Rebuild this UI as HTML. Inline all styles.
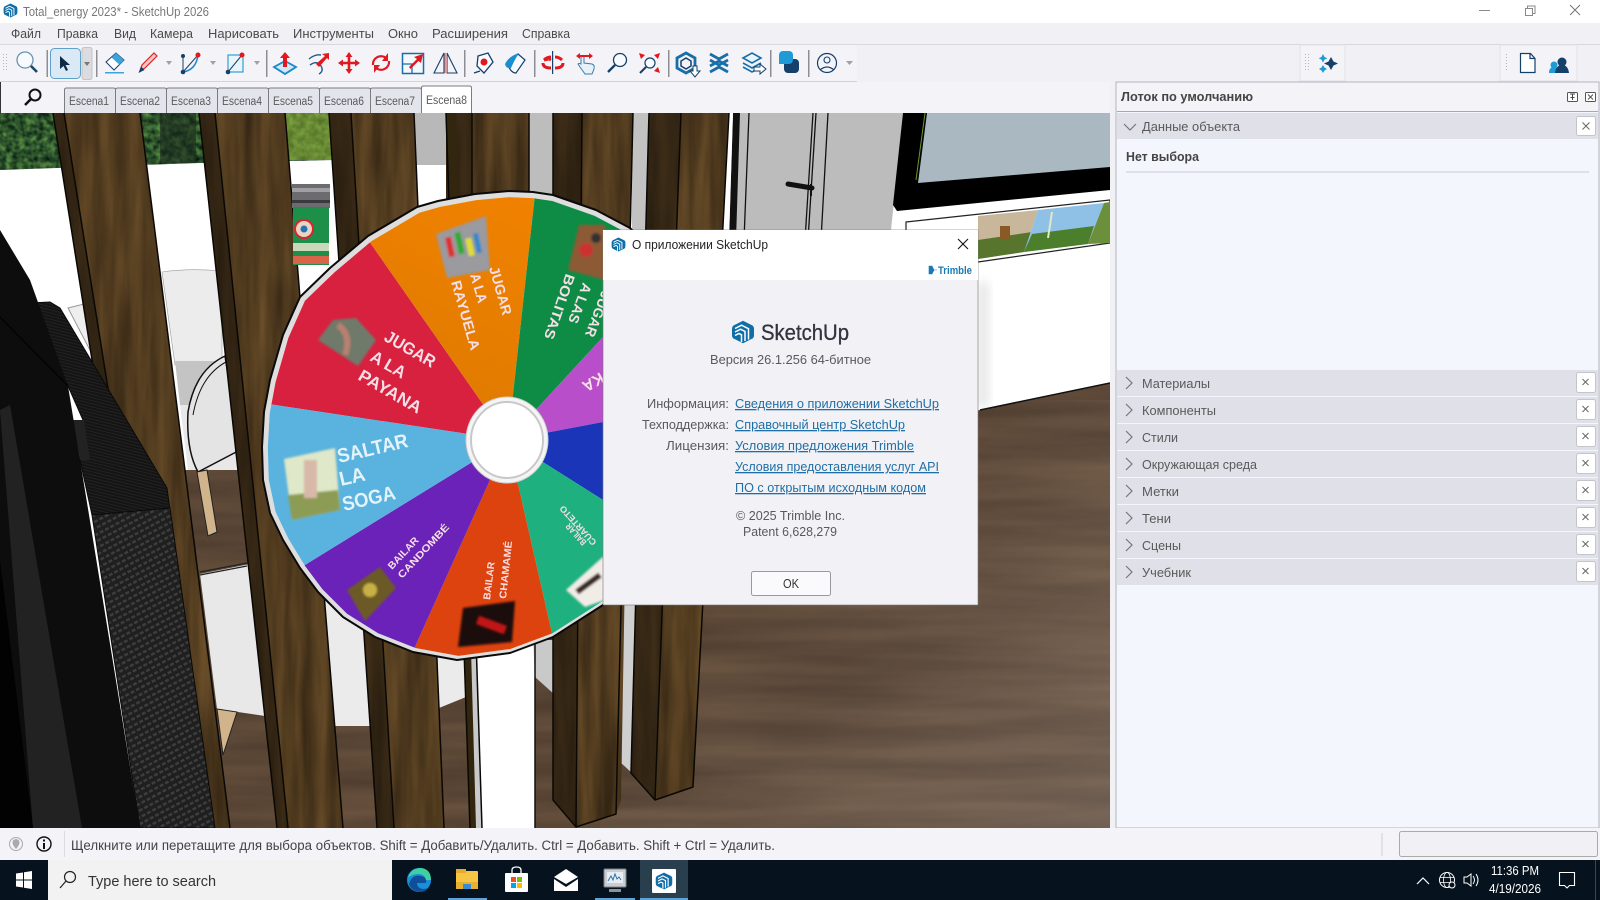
<!DOCTYPE html>
<html lang="ru"><head><meta charset="utf-8"><title>SketchUp</title>
<style>
html,body{margin:0;padding:0;width:1600px;height:900px;overflow:hidden;background:#f0f0f5}
svg{display:block}
text{font-family:"Liberation Sans","Noto Sans CJK SC",sans-serif}
.m{font-size:13px;fill:#4a4a4a}
.tab{font-size:11.5px;fill:#5a5a5a}
.row{font-size:13px;fill:#5a5a5a}
.lb{font-size:13px;fill:#5a5a5a}
.lk{font-size:13px;fill:#1f6fa6;text-decoration:underline}
.w{font-weight:bold;fill:#f6dfe6}
</style></head><body>
<svg xmlns="http://www.w3.org/2000/svg" width="1600" height="900" viewBox="0 0 1600 900">
<defs>
<filter id="wood" x="0" y="0" width="1" height="1" color-interpolation-filters="sRGB"><feTurbulence type="fractalNoise" baseFrequency="0.07 0.007" numOctaves="3" seed="4"/><feColorMatrix values=".28 0 0 0 .175 .21 0 0 0 .125 .11 0 0 0 .065 0 0 0 0 1"/></filter>
<filter id="floorf" x="0" y="0" width="1" height="1" color-interpolation-filters="sRGB"><feTurbulence type="fractalNoise" baseFrequency="0.004 0.05" numOctaves="3" seed="8"/><feColorMatrix values=".16 0 0 0 .275 .13 0 0 0 .21 .1 0 0 0 .16 0 0 0 0 1"/></filter>
<filter id="forest" x="0" y="0" width="1" height="1" color-interpolation-filters="sRGB"><feTurbulence type="fractalNoise" baseFrequency="0.16" numOctaves="2" seed="3"/><feColorMatrix values=".5 0 0 0 -.07 .7 0 0 0 -.02 .3 0 0 0 .02 0 0 0 0 1"/></filter>
<filter id="blur1" x="-10%" y="-10%" width="120%" height="120%"><feGaussianBlur stdDeviation="1"/></filter>
<filter id="sh" x="-50%" y="-10%" width="200%" height="120%"><feGaussianBlur stdDeviation="5"/></filter>
<linearGradient id="fl" x1="0" y1="0" x2="1" y2="1"><stop offset=".35" stop-color="#fff" stop-opacity="0"/><stop offset="1" stop-color="#fff" stop-opacity=".16"/></linearGradient>
<linearGradient id="orng" x1="0" y1="1" x2=".3" y2="0"><stop offset="0" stop-color="#d97800"/><stop offset="1" stop-color="#f58300"/></linearGradient>
<pattern id="carbon" width="6" height="6" patternUnits="userSpaceOnUse" patternTransform="rotate(-28)"><rect width="6" height="6" fill="#1f1f1f"/><rect width="4" height="2.500" fill="#3d3d3d"/></pattern>
<pattern id="rib" width="4" height="3" patternUnits="userSpaceOnUse" patternTransform="rotate(14)"><rect width="4" height="3" fill="#141414"/><rect width="4" height="1" fill="#222"/></pattern>
<pattern id="grip" width="3" height="3" patternUnits="userSpaceOnUse"><rect width="1" height="1" fill="#b5b5bb"/></pattern>
<clipPath id="vp"><rect x="0" y="113" width="1110" height="715"/></clipPath>
<clipPath id="planks">
<polygon points="53,113 140,113 230,828 166,828"/>
<polygon points="199,113 285,113 343,828 277,828"/>
<polygon points="329,113 414,113 444,828 377,828"/>
<polygon points="446,113 529,113 529,280 446,280"/>
<polygon points="553,113 633,113 621,800 616,814 576,827 553,800"/>
<polygon points="649,113 729,113 693,787 655,800 631,773"/>
</clipPath>
<clipPath id="wheelclip"><polygon transform="translate(525 470) scale(.978) translate(-525 -470)" points="509,191 533,192 553,195 596,210 630,228 690,290 722,400 700,510 603,605 553,637 510,653 457,660 413,652 375,637 343,617 318,592 300,568 283,540 270,513 263,480 262,447 264,412 270,380 283,335 300,297 330,268 368,236 417,207 438,201 475,194"/></clipPath>
<symbol id="su" viewBox="0 0 24 24">
<path d="M12 .8 21 5.200Q23 6.300 23 8.800V15.200Q23 17.700 21 18.800L12 23.200 3 18.800Q1 17.700 1 15.200V8.800Q1 6.300 3 5.200Z" fill="#0f6ea8"/>
<path d="M4 8.500 10.500 5.200 17.500 8.700V19.500M4 12 9.500 9.200 14 11.500V21M4 15.500 8 13.500 10.500 14.800V22" fill="none" stroke="#fff" stroke-width="1.500"/>
</symbol>
</defs>

<rect width="1600" height="900" fill="#f0f0f5"/>
<!-- title bar -->
<rect width="1600" height="23" fill="#fff"/>
<use href="#su" x="3" y="3" width="15" height="15"/>
<text x="23" y="16" font-size="12.500" fill="#777" textLength="186" lengthAdjust="spacingAndGlyphs">Total_energy 2023* - SketchUp 2026</text>
<path d="M1479 10.500H1490" stroke="#8a8a8a"/>
<path d="M1525.500 8.500h7v7h-7zM1527.500 8.500v-2.500h7.500v7.500h-2.500" fill="none" stroke="#8a8a8a"/>
<path d="M1570 5l10 10M1580 5l-10 10" stroke="#777" stroke-width="1"/>
<!-- menu -->
<text class="m" x="11" y="38" textLength="30" lengthAdjust="spacingAndGlyphs">Файл</text>
<text class="m" x="57" y="38" textLength="41" lengthAdjust="spacingAndGlyphs">Правка</text>
<text class="m" x="114" y="38" textLength="22" lengthAdjust="spacingAndGlyphs">Вид</text>
<text class="m" x="150" y="38" textLength="43" lengthAdjust="spacingAndGlyphs">Камера</text>
<text class="m" x="208" y="38" textLength="71" lengthAdjust="spacingAndGlyphs">Нарисовать</text>
<text class="m" x="293" y="38" textLength="81" lengthAdjust="spacingAndGlyphs">Инструменты</text>
<text class="m" x="388" y="38" textLength="30" lengthAdjust="spacingAndGlyphs">Окно</text>
<text class="m" x="432" y="38" textLength="76" lengthAdjust="spacingAndGlyphs">Расширения</text>
<text class="m" x="522" y="38" textLength="48" lengthAdjust="spacingAndGlyphs">Справка</text>
<rect y="44" width="1600" height="1" fill="#d8d8de"/>
<!-- toolbar -->
<rect x="0" y="45" width="857" height="36" fill="#f3f3f8"/>
<rect x="0" y="81" width="857" height="1" fill="#d2d2d8"/>
<rect x="3" y="54" width="5" height="18" fill="url(#grip)"/>
<rect x="1300" y="45" width="45" height="36" fill="#f3f3f8" stroke="#e2e2e8"/>
<rect x="1500" y="45" width="77" height="36" fill="#f3f3f8" stroke="#e2e2e8"/>
<rect x="1304" y="54" width="5" height="16" fill="url(#grip)"/>
<rect x="1504" y="54" width="5" height="16" fill="url(#grip)"/>
<g fill="#8d8d93">
<rect x="46.500" y="50" width="1.500" height="27"/><rect x="96" y="50" width="1.500" height="27"/><rect x="266" y="50" width="1.500" height="27"/><rect x="464" y="50" width="1.500" height="27"/><rect x="534" y="50" width="1.500" height="27"/><rect x="668" y="50" width="1.500" height="27"/><rect x="770" y="50" width="1.500" height="27"/><rect x="808" y="50" width="1.500" height="27"/>
</g>
<!-- magnifier -->
<circle cx="25" cy="60" r="8" fill="#f8fbfe" stroke="#6b93b0" stroke-width="1.300"/><path d="M31 66l6 6" stroke="#1c4565" stroke-width="2.600"/>
<!-- select -->
<rect x="50.500" y="48.500" width="30" height="30" rx="4" fill="#d9e9f5" stroke="#5f9fc8"/>
<path d="M60 56V69L63.500 66 66 71 68 70 65.500 65H70Z" fill="#102a44"/>
<rect x="82" y="47.500" width="10" height="32" rx="2" fill="#dcdce0" stroke="#c4c4c8"/><path d="M84 62h6l-3 4z" fill="#777"/>
<!-- eraser -->
<path d="M106 62 116 53 124 60 114 70Z" fill="#fff" stroke="#14406a" stroke-width="1"/><path d="M111.500 57.500 116 53 124 60 119.500 64.800Z" fill="#3ba4dc"/><rect x="105" y="72" width="19" height="1.500" fill="#3ba4dc"/>
<!-- pencil -->
<path d="M140 71 142 65 154 53 157 56 145 68Z" fill="#f4c4c0" stroke="#d82a2a" stroke-width="1.200"/><path d="M138.500 73 141 66.500 144.500 70Z" fill="#14406a"/>
<path d="M166 61h6l-3 4z" fill="#a0a0a6"/>
<!-- arc -->
<path d="M183 56V72L198 55" fill="none" stroke="#14406a" stroke-width="1"/><path d="M183 72Q196 70 198 55" fill="none" stroke="#1c86c8" stroke-width="1.500"/><circle cx="183" cy="56" r="2" fill="#14406a"/><circle cx="183" cy="72" r="2.300" fill="#14406a"/><circle cx="198" cy="55" r="2.500" fill="#e0181f"/>
<path d="M210 61h6l-3 4z" fill="#a0a0a6"/>
<!-- rect -->
<rect x="228" y="55" width="15" height="17" fill="#eaf4fb" stroke="#2196d3" stroke-width="1.100"/><path d="M228 72 242 55" stroke="#14406a" stroke-width="1"/><circle cx="242" cy="55" r="2.500" fill="#e0181f"/><circle cx="228" cy="72" r="2.300" fill="#14406a"/>
<path d="M254 61h6l-3 4z" fill="#a0a0a6"/>
<!-- pushpull -->
<path d="M274 67 285 61 296 67 285 74Z" fill="#cfe8f7" stroke="#1a87c8" stroke-width="1.800"/><path d="M283 67V58H280L285 52 290 58H287V67Z" fill="#e0181f"/>
<!-- follow me -->
<path d="M309 59Q315 54 321 55M310 65Q317 60 321 66 324 71 319 74" fill="none" stroke="#1d5d8c" stroke-width="1.400"/><path d="M316 64 325 56 322 54 329 53 329 60 327 58 319 67Z" fill="#e0181f"/>
<!-- move -->
<path d="M349 52l3.500 5h-2.200v4.700h4.700V59.500L360 63l-5 3.500v-2.200h-4.700V69h2.200L349 74l-3.500-5h2.200v-4.700H343v2.200L338 63l5-3.500v2.200h4.700V57h-2.200Z" fill="#e0181f"/>
<!-- rotate -->
<path d="M373 65a8 8 0 0 1 13-7M389 61a8 8 0 0 1-13 7" fill="none" stroke="#e0181f" stroke-width="2.200"/><path d="M388 53v8h-6zM374 73v-8h6z" fill="#e0181f"/>
<!-- scale -->
<rect x="402.500" y="53.500" width="21" height="20" fill="#f3f8fc" stroke="#1a6ea8" stroke-width="1.500"/><path d="M402 64h10v10" fill="none" stroke="#1a6ea8" stroke-width="1.300"/><path d="M409 67l8-8-3-2 9-3-2 9-2.500-2-8 8z" fill="#e0181f"/>
<!-- mirror -->
<path d="M444 53 434 73H444ZM447 53 457 73H447Z" fill="#f4f4f8" stroke="#14406a" stroke-width="1.100"/><rect x="444.500" y="53" width="2.500" height="20" fill="#d99"/>
<!-- tape -->
<path d="M478 56 488 53 493 62 484 73 477 66Z" fill="#f7fbff" stroke="#14406a" stroke-width="1.300"/><circle cx="484" cy="62" r="3.500" fill="#e0181f"/><path d="M474 73 480 71" stroke="#14406a" stroke-width="1.400"/>
<!-- paint -->
<path d="M508 65 518 54 525 60 516 73Q511 73 508 65Z" fill="#f7fbff" stroke="#14406a" stroke-width="1.200"/><path d="M505 64Q509 56 519 53 515 59 511 68 506 69 505 64Z" fill="#1a8ed0"/>
<!-- orbit -->
<path d="M544 60Q552 58 549 60M543 63q0 5 8 5M563 63q0 5-8 5M544 60q3-3 7-3M562 60q-3-3-7-3" fill="none" stroke="#e0181f" stroke-width="3"/><rect x="552" y="51" width="1.200" height="23" fill="#14406a"/>
<!-- pan -->
<path d="M581 63V57q1.500-2 3 0v6l8 1q3 1 2 5l-2 5h-7l-5-7-2-3q1-1 3 0Z" fill="#e8f1f8" stroke="#3a7ba8"/><path d="M576 56l4-3v2h9v-2l4 3-4 3v-2h-9v2z" fill="#e0181f"/>
<!-- zoom -->
<circle cx="620" cy="60" r="6.500" fill="#f8fbfe" stroke="#14406a" stroke-width="1.300"/><path d="M615 65l-7 7" stroke="#14406a" stroke-width="2.300"/>
<!-- zoom ext -->
<circle cx="650" cy="63" r="5" fill="#f8fbfe" stroke="#14406a" stroke-width="1.200"/><path d="M646 67l-6 6" stroke="#14406a" stroke-width="2"/><path d="M639 53l6 2-4 4zM660 53l-2 6-4-4zM660 73l-6-2 4-4z" fill="#e0181f"/>
<!-- 3dw -->
<path d="M686 53 695 58V68L686 73 677 68V58Z" fill="#f3f3f8" stroke="#1a6ea8" stroke-width="2.800"/><path d="M686 58 691 61V66L686 69 681 66V61Z" fill="none" stroke="#14406a" stroke-width="1.500"/><path d="M693 66h4v5h3l-5 6-5-6h3z" fill="#fff" stroke="#14406a"/>
<!-- extension -->
<path d="M710 54l9 5 9-5M710 72l9-5 9 5M710 60l9 5 9-5M710 66l9-5 9 5" fill="none" stroke="#1a6ea8" stroke-width="2.800"/>
<!-- layers -->
<path d="M743 58l9-5 9 5-9 5zM743 63l9 5 9-5M743 67l9 5 4-2" fill="#eaf4fb" stroke="#1a6ea8" stroke-width="1.600"/><path d="M754 67h6v-3l6 5-6 5v-3h-6z" fill="#fff" stroke="#14406a"/>
<!-- chat -->
<rect x="784" y="59" width="15" height="14" rx="4" fill="#14406a"/><path d="M779 55a4 4 0 0 1 4-4h6a4 4 0 0 1 4 4v5a4 4 0 0 1-4 4h-10z" fill="#1e9ad6"/>
<!-- user -->
<circle cx="827" cy="63" r="9.500" fill="none" stroke="#14406a" stroke-width="1.200"/><circle cx="827" cy="60" r="3" fill="none" stroke="#14406a" stroke-width="1.100"/><path d="M820 70q7-6 14 0" fill="none" stroke="#14406a" stroke-width="1.100"/>
<path d="M846 61h7l-3.500 4z" fill="#a0a0a6"/>
<!-- ai sparkle -->
<path d="M1331 57l2.500 4.500 4.500 2-4.500 2-2.500 4.500-2.500-4.500-4.500-2 4.500-2z" fill="#14406a"/><path d="M1323 54l1.500 3 2.800 1.300-2.800 1.300-1.500 3-1.500-3-2.800-1.300 2.800-1.300zM1323 65l1.500 2.500 2.500 1.500-2.500 1.500-1.500 2.500-1.500-2.500-2.500-1.500 2.500-1.500z" fill="#1e9ad6"/>
<!-- doc -->
<path d="M1520.500 53.500h10l4.500 5v14h-14.500zM1530 53.500v5h5" fill="#fff" stroke="#14406a" stroke-width="1.200"/>
<!-- users -->
<circle cx="1554" cy="65" r="3.500" fill="#1e9ad6"/><path d="M1549 73q0-6 5-6t5 6z" fill="#1e9ad6"/><circle cx="1562" cy="62" r="4.500" fill="#14406a"/><path d="M1555 73q1-8 7-8t7 8z" fill="#14406a"/>

<!-- scene tabs -->
<rect x="0" y="82" width="1110" height="31" fill="#f3f3f8"/><rect x="0" y="82" width="1" height="31" fill="#333"/>
<circle cx="35" cy="95" r="5.500" fill="none" stroke="#111" stroke-width="2"/><path d="M31 99l-6 6" stroke="#111" stroke-width="2.500"/>
<g fill="#e4e5ec" stroke="#7b7b80">
<path d="M64.500 113V90q0-2 2-2h47q2 0 2 2v23"/><path d="M115.500 113V90q0-2 2-2h47q2 0 2 2v23"/><path d="M166.500 113V90q0-2 2-2h47q2 0 2 2v23"/><path d="M217.500 113V90q0-2 2-2h47q2 0 2 2v23"/><path d="M268.500 113V90q0-2 2-2h47q2 0 2 2v23"/><path d="M319.500 113V90q0-2 2-2h47q2 0 2 2v23"/><path d="M370.500 113V90q0-2 2-2h47q2 0 2 2v23"/><path d="M421.500 113V88q0-2 2-2h46q2 0 2 2v25" fill="#fff"/>
</g>
<text class="tab" x="69" y="105" textLength="40" lengthAdjust="spacingAndGlyphs">Escena1</text><text class="tab" x="120" y="105" textLength="40" lengthAdjust="spacingAndGlyphs">Escena2</text><text class="tab" x="171" y="105" textLength="40" lengthAdjust="spacingAndGlyphs">Escena3</text><text class="tab" x="222" y="105" textLength="40" lengthAdjust="spacingAndGlyphs">Escena4</text><text class="tab" x="273" y="105" textLength="40" lengthAdjust="spacingAndGlyphs">Escena5</text><text class="tab" x="324" y="105" textLength="40" lengthAdjust="spacingAndGlyphs">Escena6</text><text class="tab" x="375" y="105" textLength="40" lengthAdjust="spacingAndGlyphs">Escena7</text><text class="tab" x="426" y="104" textLength="41" lengthAdjust="spacingAndGlyphs">Escena8</text>

<!-- VIEWPORT -->
<g clip-path="url(#vp)">
<rect x="0" y="113" width="1110" height="715" fill="#fff"/>
<!-- forest -->
<rect x="0" y="113" width="335" height="60" filter="url(#forest)" clip-path="polygon(0 0,100% 0,100% 47px,200px 50px,0 57px)"/>
<rect x="285" y="113" width="48" height="47" fill="#8fae3a" opacity=".6"/>
<rect x="160" y="113" width="36" height="50" fill="#1d2b1e" opacity=".6"/>
<!-- greys -->
<rect x="414" y="113" width="34" height="52" fill="#b8b8b8"/>
<rect x="529" y="113" width="26" height="120" fill="#bdbdbd"/>
<rect x="632" y="113" width="18" height="120" fill="#c2c2c2"/>
<polygon points="733,113 903,113 890,240 725,240" fill="#bcbcbc"/>
<polygon points="733,113 740,113 736,240 729,240" fill="#111"/>
<path d="M749 113 744 240M813 113 805 240M816 113 808 240M828 113 821 240" stroke="#111" stroke-width="1.300" fill="none"/>
<path d="M788 184 812 188" stroke="#111" stroke-width="5" stroke-linecap="round"/><path d="M811 184V196" stroke="#111" stroke-width="2"/>
<!-- screen -->
<polygon points="903,113 1110,113 1110,190 897,211 893,205" fill="#000"/>
<polygon points="927,113 1110,113 1110,167 918,183" fill="#a9b8c1"/>
<path d="M925 113 916 180" stroke="#6a9a2a" stroke-width="1"/>
<!-- banner -->
<polygon points="906,222 1110,200 1110,243 978,262 906,270" fill="#fff" stroke="#222" stroke-width="1.200"/>
<polygon points="978,216 1038,210 1024,252 978,259" fill="#c9b79b"/><polygon points="978,240 1032,232 1024,252 978,259" fill="#57752c"/><rect x="1000" y="226" width="10" height="14" fill="#8a5a24"/>
<polygon points="1038,210 1104,203 1088,244 1024,252" fill="#8fc0e6"/><polygon points="1032,234 1094,226 1088,244 1024,252" fill="#4c7f2c"/><path d="M1048 238 1052 212" stroke="#dfe8c8" stroke-width="2"/>
<polygon points="1104,203 1110,202 1110,243 1088,244" fill="#6b8f3a"/>
<!-- floor -->
<rect x="172" y="383" width="938" height="445" filter="url(#floorf)" clip-path="polygon(0 87px,428px 87px,808px 27px,938px 0,938px 445px,0 445px)"/>
<rect x="600" y="400" width="510" height="428" fill="url(#fl)"/>
<path d="M980 410 1110 383" stroke="#111" stroke-width="1.500"/>
<!-- chair -->
<path d="M162 272Q190 268 222 271V365H175Z" fill="#ececec" stroke="#999" stroke-width=".6"/>
<polygon points="175,361 225,361 225,405 180,405" fill="#c4c4c4"/>
<polygon points="180,405 230,405 240,470 188,470" fill="#e8e8e8"/>
<path d="M188 412Q195 370 225 356L240 450 198 472Q186 450 188 412Z" fill="#e4e4e4" stroke="#111" stroke-width="1.500"/>
<path d="M193 415Q200 376 226 362" fill="none" stroke="#111"/>
<polygon points="197,472 207,470 217,532 208,536" fill="#d2b48c" stroke="#222"/>
<polygon points="200,574 250,564 265,716 217,709" fill="#e8e8e8"/>
<path d="M200 572 247 563M200 575 247 566" stroke="#222" stroke-width="1.200"/>
<polygon points="217,709 237,712 223,755" fill="#d2b48c" stroke="#222"/>
<polygon points="68,308 84,304 92,354" fill="#eee" stroke="#999"/>
<!-- cushions -->
<rect x="320" y="590" width="55" height="136" fill="#ebebeb"/>
<polygon points="437,640 466,640 466,697 439,708" fill="#ebebeb"/>
<!-- white column & greys at bottom -->
<polygon points="470,640 535,640 535,828 480,828" fill="#fff"/>
<polygon points="466,640 477,640 482,828 474,828" fill="#c9c9c9"/>
<polygon points="533,640 555,640 555,695 535,677" fill="#c9c9c9"/><path d="M535 640V828" stroke="#111" stroke-width="1.500"/>
<polygon points="622,600 636,600 632,773 620,762" fill="#cfcfcf"/>
<polygon points="729,113 733,113 729,240 725,240" fill="#fff"/>
<!-- planks -->
<rect x="0" y="113" width="760" height="715" filter="url(#wood)" clip-path="url(#planks)"/>
<g fill="#17110a" opacity=".5">
<polygon points="53,113 64,113 178,828 166,828"/>
<polygon points="199,113 215,113 288,828 277,828"/>
<polygon points="329,113 351,113 394,828 377,828"/>
<polygon points="446,113 472,113 472,280 446,280"/>
<polygon points="553,113 582,113 576,827 553,800"/>
<polygon points="649,113 681,113 655,800 631,773"/>
</g>
<polygon points="446,113 456,113 476,828 470,828" fill="#33260f"/>
<g fill="none" stroke="#0a0805" stroke-width="1.500" stroke-linejoin="round">
<path d="M53 113 166 828M140 113 230 828M64 113 178 828"/>
<path d="M199 113 277 828M285 113 343 828M215 113 288 828"/>
<path d="M329 113 377 828M414 113 444 828M351 113 394 828"/>
<path d="M446 113 470 828M529 113V280M472 113V280M476 640 482 828"/>
<path d="M553 113V800L576 827 616 814 633 113M582 113 576 827"/>
<path d="M649 113 631 773 655 800 693 787 729 113M681 113 655 800"/>
</g>
<!-- bucket -->
<rect x="292" y="184" width="38" height="24" fill="#6b6b70"/><rect x="292" y="188" width="38" height="4" fill="#a0a0a4"/><rect x="292" y="200" width="38" height="3" fill="#3a3a3a"/>
<rect x="293" y="207" width="36" height="58" fill="#1e8f49"/><rect x="293" y="243" width="36" height="8" fill="#c8d8b8"/><rect x="293" y="256" width="36" height="8" fill="#d8644a"/>
<circle cx="304" cy="229" r="9" fill="#e8d6c0" stroke="#d23" stroke-width="2"/><circle cx="304" cy="229" r="3.500" fill="#2a70b8"/>
<!-- WHEEL -->
<polygon points="509,191 533,192 553,195 596,210 630,228 690,290 722,400 700,510 603,605 553,637 510,653 457,660 413,652 375,637 343,617 318,592 300,568 283,540 270,513 263,480 262,447 264,412 270,380 283,335 300,297 330,268 368,236 417,207 438,201 475,194" fill="#dedede" stroke="#0a0a0a" stroke-width="2" stroke-linejoin="round"/>
<g clip-path="url(#wheelclip)">
<rect x="250" y="180" width="480" height="490" fill="#fff"/>
<polygon points="508,440 155,387 120,150 311,158" fill="#d8203f"/>
<polygon points="508,440 311,158 548,76" fill="url(#orng)"/>
<polygon points="508,440 548,76 720,100 698,234" fill="#0e8c45"/>
<polygon points="508,440 698,234 800,250 793,386" fill="#b84ec9"/>
<polygon points="508,440 793,386 793,620" fill="#1a35b8"/>
<polygon points="508,440 793,620 700,760 574,730" fill="#1fb07f"/>
<polygon points="508,440 574,730 365,758" fill="#dd430e"/>
<polygon points="508,440 365,758 196,632" fill="#6a22b8"/>
<polygon points="508,440 196,632 155,387" fill="#5ab2de"/>
</g>
<!-- photos -->
<g filter="url(#blur1)">
<polygon points="436,234 486,216 490,270 447,278" fill="#9a9a9f"/>
<rect x="447" y="237" width="6" height="20" fill="#d33" transform="rotate(-12 450 247)"/><rect x="457" y="232" width="6" height="22" fill="#3a3" transform="rotate(-12 460 245)"/><rect x="467" y="238" width="6" height="18" fill="#dd3" transform="rotate(-12 470 247)"/><rect x="475" y="233" width="5" height="20" fill="#38c" transform="rotate(-12 478 243)"/>
<polygon points="333,320 356,318 376,340 358,366 318,340" fill="#707a6a"/><path d="M338 325Q352 335 345 355" stroke="#b88070" stroke-width="6" fill="none"/>
<polygon points="284,459 335,448 340,510 292,520" fill="#dfe8c8"/><polygon points="288,495 338,490 340,510 292,520" fill="#8d9c55"/><rect x="304" y="460" width="13" height="38" fill="#d8b8a8"/>
<polygon points="579,225 605,225 605,280 568,270" fill="#8c5a34"/><circle cx="586" cy="250" r="7" fill="#c33"/><circle cx="596" cy="238" r="5" fill="#333"/>
<polygon points="347,590 380,567 396,588 365,621" fill="#6c5a28"/><circle cx="370" cy="590" r="7" fill="#c8b044"/>
<polygon points="463,608 515,601 512,642 458,647" fill="#1a0d0d"/><path d="M478 620 505 630" stroke="#c01818" stroke-width="8"/>
<polygon points="566,590 605,555 605,600 585,607" fill="#f2ece6"/><path d="M577 592 600 575" stroke="#3a2a20" stroke-width="6"/>
</g>
<!-- wheel text -->
<text class="w" font-size="17" transform="translate(383 340) rotate(30)" textLength="56" lengthAdjust="spacingAndGlyphs">JUGAR</text>
<text class="w" font-size="17" transform="translate(369 360) rotate(30)" textLength="38" lengthAdjust="spacingAndGlyphs">A LA</text>
<text class="w" font-size="17" transform="translate(357 379) rotate(30)" textLength="70" lengthAdjust="spacingAndGlyphs">PAYANA</text>
<text class="w" font-size="14" transform="translate(489 268) rotate(74)" textLength="50" lengthAdjust="spacingAndGlyphs">JUGAR</text>
<text class="w" font-size="14" transform="translate(470 275) rotate(74)" textLength="30" lengthAdjust="spacingAndGlyphs">A LA</text>
<text class="w" font-size="14" transform="translate(451 282) rotate(74)" textLength="72" lengthAdjust="spacingAndGlyphs">RAYUELA</text>
<text class="w" font-size="14" transform="translate(602 290) rotate(111)" textLength="48" lengthAdjust="spacingAndGlyphs">JUGAR</text>
<text class="w" font-size="14" transform="translate(583 282) rotate(111)" textLength="42" lengthAdjust="spacingAndGlyphs">A LAS</text>
<text class="w" font-size="14" transform="translate(566 273) rotate(109)" textLength="68" lengthAdjust="spacingAndGlyphs">BOLITAS</text>
<text class="w" font-size="16" transform="translate(600 372) rotate(150)" textLength="22" lengthAdjust="spacingAndGlyphs">KA</text>
<text font-size="20" font-weight="bold" fill="#e4f3fb" transform="translate(339 463) rotate(-13)" textLength="72" lengthAdjust="spacingAndGlyphs">SALTAR</text>
<text font-size="20" font-weight="bold" fill="#e4f3fb" transform="translate(341 486) rotate(-13)" textLength="26" lengthAdjust="spacingAndGlyphs">LA</text>
<text font-size="20" font-weight="bold" fill="#e4f3fb" transform="translate(344 511) rotate(-13)" textLength="54" lengthAdjust="spacingAndGlyphs">SOGA</text>
<text class="w" font-size="10" transform="translate(392 570) rotate(-47)" textLength="40" lengthAdjust="spacingAndGlyphs">BAILAR</text>
<text class="w" font-size="10" transform="translate(402 579) rotate(-47)" textLength="70" lengthAdjust="spacingAndGlyphs">CANDOMBÉ</text>
<text class="w" font-size="10" transform="translate(490 600) rotate(-83)" textLength="38" lengthAdjust="spacingAndGlyphs">BAILAR</text>
<text class="w" font-size="10" transform="translate(506 599) rotate(-84)" textLength="58" lengthAdjust="spacingAndGlyphs">CHAMAMÉ</text>
<text class="w" font-size="9" transform="translate(587 542) rotate(228)" textLength="26" lengthAdjust="spacingAndGlyphs">BAILAR</text>
<text class="w" font-size="9" transform="translate(597 542) rotate(228)" textLength="50" lengthAdjust="spacingAndGlyphs">CUARTETO</text>
<!-- hub -->
<ellipse cx="507" cy="440" rx="41" ry="43" fill="#f4f4f4" stroke="#cfcfcf" stroke-width="1"/>
<ellipse cx="507" cy="440" rx="36" ry="38" fill="#fff" stroke="#c8c8c8" stroke-width="2"/>
<!-- black objects -->
<polygon points="30,303 50,302 60,308 167,488 170,510 92,515 80,460 83,420 68,386" fill="url(#rib)" stroke="#0a0a0a"/>
<polygon points="73,420 84,420 90,460 80,460" fill="#222"/>
<polygon points="92,515 170,508 215,828 140,828" fill="url(#carbon)" stroke="#0a0a0a"/>
<polygon points="0,230 30,280 68,386 140,828 0,828" fill="#0d0d0d"/>
<polygon points="0,410 10,405 82,828 33,828" fill="#222"/>
<polygon points="0,560 33,828 0,828" fill="#020202"/>
<path d="M0 317 68 386" stroke="#000" stroke-width="1"/>
<!-- dialog shadow on wall -->
<rect x="978" y="282" width="10" height="125" fill="#777" opacity=".2" filter="url(#sh)"/>
</g>

<!-- right panel -->
<rect x="1116" y="82" width="483" height="746" fill="#f3f6fd" stroke="#b4b4ba"/>
<rect x="1117" y="83" width="481" height="28" fill="#f3f3f8"/><rect x="1117" y="111" width="481" height="1" fill="#a8a8ae"/>
<text x="1121" y="101" font-size="13" font-weight="bold" fill="#444" textLength="132" lengthAdjust="spacingAndGlyphs">Лоток по умолчанию</text>
<rect x="1567.500" y="92.500" width="10" height="9" fill="#fff" stroke="#555" rx="1"/><path d="M1570 94h5M1570.500 97.500h4M1572.500 94v6" stroke="#444"/>
<rect x="1585.500" y="92.500" width="10" height="9" fill="#fff" stroke="#555" rx="1"/><path d="M1588 94.500l5 5M1593 94.500l-5 5" stroke="#555"/>
<rect x="1117" y="113" width="481" height="26" fill="#dfe0e8"/>
<path d="M1124 124l6 6 6-6" fill="none" stroke="#777" stroke-width="1.200"/>
<text class="row" x="1142" y="131" textLength="98" lengthAdjust="spacingAndGlyphs">Данные объекта</text>
<rect x="1576.500" y="116.500" width="19" height="19" rx="2" fill="#fff" stroke="#c4c4ca"/><path d="M1582.500 122.500l7 7M1589.500 122.500l-7 7" stroke="#666"/>
<text x="1126" y="161" font-size="13" font-weight="bold" fill="#444" textLength="73" lengthAdjust="spacingAndGlyphs">Нет выбора</text>
<rect x="1126" y="171" width="463" height="2" fill="#dfe1e9"/>
<g fill="#dfe0e8"><rect x="1117" y="370" width="481" height="26"/><rect x="1117" y="397" width="481" height="26"/><rect x="1117" y="424" width="481" height="26"/><rect x="1117" y="451" width="481" height="26"/><rect x="1117" y="478" width="481" height="26"/><rect x="1117" y="505" width="481" height="26"/><rect x="1117" y="532" width="481" height="26"/><rect x="1117" y="559" width="481" height="26"/></g>
<g fill="none" stroke="#777" stroke-width="1.200"><path d="M1126 377l6 6-6 6M1126 404l6 6-6 6M1126 431l6 6-6 6M1126 458l6 6-6 6M1126 485l6 6-6 6M1126 512l6 6-6 6M1126 539l6 6-6 6M1126 566l6 6-6 6"/></g>
<text class="row" x="1142" y="388" textLength="68" lengthAdjust="spacingAndGlyphs">Материалы</text>
<text class="row" x="1142" y="415" textLength="74" lengthAdjust="spacingAndGlyphs">Компоненты</text>
<text class="row" x="1142" y="442" textLength="36" lengthAdjust="spacingAndGlyphs">Стили</text>
<text class="row" x="1142" y="469" textLength="115" lengthAdjust="spacingAndGlyphs">Окружающая среда</text>
<text class="row" x="1142" y="496" textLength="37" lengthAdjust="spacingAndGlyphs">Метки</text>
<text class="row" x="1142" y="523" textLength="29" lengthAdjust="spacingAndGlyphs">Тени</text>
<text class="row" x="1142" y="550" textLength="39" lengthAdjust="spacingAndGlyphs">Сцены</text>
<text class="row" x="1142" y="577" textLength="49" lengthAdjust="spacingAndGlyphs">Учебник</text>
<g fill="#fff" stroke="#c4c4ca"><rect x="1576.500" y="372.500" width="19" height="20" rx="2"/><rect x="1576.500" y="399.500" width="19" height="20" rx="2"/><rect x="1576.500" y="426.500" width="19" height="20" rx="2"/><rect x="1576.500" y="453.500" width="19" height="20" rx="2"/><rect x="1576.500" y="480.500" width="19" height="20" rx="2"/><rect x="1576.500" y="507.500" width="19" height="20" rx="2"/><rect x="1576.500" y="534.500" width="19" height="20" rx="2"/><rect x="1576.500" y="561.500" width="19" height="20" rx="2"/></g>
<path d="M1582.500 379l6 6M1588.500 379l-6 6M1582.500 406l6 6M1588.500 406l-6 6M1582.500 433l6 6M1588.500 433l-6 6M1582.500 460l6 6M1588.500 460l-6 6M1582.500 487l6 6M1588.500 487l-6 6M1582.500 514l6 6M1588.500 514l-6 6M1582.500 541l6 6M1588.500 541l-6 6M1582.500 568l6 6M1588.500 568l-6 6" stroke="#666"/>

<!-- DIALOG -->
<rect x="603" y="230" width="375" height="375" fill="#f1f1f6" stroke="#777" stroke-width=".6"/>
<rect x="603" y="230" width="375" height="50" fill="#fff"/>
<use href="#su" x="611" y="237" width="15" height="15"/>
<text x="632" y="249" font-size="12.500" fill="#222" textLength="136" lengthAdjust="spacingAndGlyphs">О приложении SketchUp</text>
<path d="M958 239l10 10M968 239l-10 10" stroke="#111" stroke-width="1.100"/>
<path d="M929 266h3l2 4-2 4h-3zM934 270h3" fill="#1b7ab5" stroke="#1b7ab5" stroke-width=".6"/>
<text x="938" y="274" font-size="11" font-weight="bold" fill="#1b7ab5" textLength="34" lengthAdjust="spacingAndGlyphs">Trimble</text>
<use href="#su" x="731" y="320" width="24" height="24"/>
<text x="761" y="340" font-size="22" fill="#33333f" stroke="#33333f" stroke-width=".3" textLength="88" lengthAdjust="spacingAndGlyphs">SketchUp</text>
<text class="lb" x="710" y="364" textLength="161" lengthAdjust="spacingAndGlyphs">Версия 26.1.256 64-битное</text>
<text class="lb" x="647" y="408" textLength="82" lengthAdjust="spacingAndGlyphs">Информация:</text>
<text class="lb" x="642" y="429" textLength="87" lengthAdjust="spacingAndGlyphs">Техподдержка:</text>
<text class="lb" x="666" y="450" textLength="63" lengthAdjust="spacingAndGlyphs">Лицензия:</text>
<text class="lk" x="735" y="408" textLength="204" lengthAdjust="spacingAndGlyphs">Сведения о приложении SketchUp</text>
<text class="lk" x="735" y="429" textLength="170" lengthAdjust="spacingAndGlyphs">Справочный центр SketchUp</text>
<text class="lk" x="735" y="450" textLength="179" lengthAdjust="spacingAndGlyphs">Условия предложения Trimble</text>
<text class="lk" x="735" y="471" textLength="204" lengthAdjust="spacingAndGlyphs">Условия предоставления услуг API</text>
<text class="lk" x="735" y="492" textLength="191" lengthAdjust="spacingAndGlyphs">ПО с открытым исходным кодом</text>
<text class="lb" x="736" y="520" textLength="109" lengthAdjust="spacingAndGlyphs">© 2025 Trimble Inc.</text>
<text class="lb" x="743" y="536" textLength="94" lengthAdjust="spacingAndGlyphs">Patent 6,628,279</text>
<rect x="751.500" y="571.500" width="79" height="24" rx="2" fill="#fafafc" stroke="#9a9a9e"/>
<text x="783" y="588" font-size="13" fill="#333" textLength="16" lengthAdjust="spacingAndGlyphs">OK</text>

<!-- status bar -->
<rect y="828" width="1600" height="32" fill="#f3f3f8"/>
<circle cx="16" cy="844" r="6.500" fill="none" stroke="#aaa"/><path d="M16 849q-3.500-4-3.500-6.500a3.500 3.500 0 0 1 7 0q0 2.500-3.500 6.500z" fill="#aaa"/>
<circle cx="44" cy="844" r="7" fill="none" stroke="#111" stroke-width="1.400"/><rect x="43" y="843" width="2" height="6" fill="#111"/><rect x="43" y="839.500" width="2" height="2" fill="#111"/>
<rect x="64" y="831" width="1" height="26" fill="#ddd"/>
<text x="71" y="850" font-size="13.500" fill="#444" textLength="704" lengthAdjust="spacingAndGlyphs">Щелкните или перетащите для выбора объектов. Shift = Добавить/Удалить. Ctrl = Добавить. Shift + Ctrl = Удалить.</text>
<rect x="1381" y="833" width="2" height="23" fill="#e2e2e6"/>
<rect x="1399.500" y="831.500" width="198" height="25" rx="2" fill="#f0f0f5" stroke="#aaa"/>

<!-- taskbar -->
<rect y="860" width="1600" height="40" fill="#06131f"/>
<path d="M16 873.500l7-1v7h-7zM24 872.300l8-1.300v8.500h-8zM16 880.500h7v7l-7-1zM24 880.500h8V889l-8-1.200z" fill="#fff"/>
<rect x="48" y="860" width="344" height="40" fill="#f2f2f2"/>
<circle cx="70" cy="877" r="5.500" fill="none" stroke="#222" stroke-width="1.200"/><path d="M66 881l-6 7" stroke="#222" stroke-width="1.200"/>
<text x="88" y="886" font-size="15" fill="#333" textLength="128" lengthAdjust="spacingAndGlyphs">Type here to search</text>
<rect x="640" y="860" width="48" height="40" fill="#2a3f4e"/>
<g fill="#5ea3d8"><rect x="448" y="898" width="39" height="2"/><rect x="595" y="898" width="40" height="2"/><rect x="640" y="898" width="48" height="2"/></g>
<!-- edge -->
<circle cx="419" cy="880" r="12" fill="#1b8ed8"/><path d="M409 884q3-10 12-8 6 1 5 7h-9q0 5 6 6 4 0 6-2-3 5-9 5-9-1-11-8z" fill="#0f4f9a"/><path d="M408 878q3-10 13-10 10 1 10 12h-5q-1-6-8-6-6 0-10 4z" fill="#3fd0a0"/>
<!-- folder -->
<rect x="456" y="871" width="22" height="18" rx="1" fill="#f6c544"/><rect x="456" y="869" width="10" height="4" fill="#e6ab2c"/><rect x="456" y="882" width="22" height="7" fill="#e8b030"/><rect x="463" y="884" width="8" height="5" fill="#3b8bd0"/>
<!-- store -->
<rect x="505" y="873" width="23" height="19" rx="1" fill="#fff"/><path d="M512 873v-3q0-3 4.500-3t4.500 3v3" fill="none" stroke="#fff" stroke-width="1.300"/><rect x="511" y="877" width="5" height="5" fill="#f25022"/><rect x="517" y="877" width="5" height="5" fill="#7fba00"/><rect x="511" y="883" width="5" height="5" fill="#00a4ef"/><rect x="517" y="883" width="5" height="5" fill="#ffb900"/>
<!-- mail -->
<path d="M554 877 566 869 578 877V891H554Z" fill="#fff"/><path d="M554 877 566 884 578 877 578 879 566 887 554 879Z" fill="#06131f"/>
<!-- perf -->
<rect x="604" y="869" width="22" height="18" rx="1" fill="#c9ced2" stroke="#7c8388"/><rect x="607" y="872" width="16" height="11" fill="#e6eef3"/><path d="M608 881l3-5 2 4 2-6 2 5 2-2 2 3" fill="none" stroke="#2f6fa8"/><path d="M609 889h12v3h-12z" fill="#8c9398"/>
<!-- su taskbar -->
<rect x="652" y="869" width="24" height="24" rx="1" fill="#fff"/>
<use href="#su" x="655" y="871" width="18" height="20"/>
<!-- tray -->
<path d="M1417 884l6-6 6 6" fill="none" stroke="#fff" stroke-width="1.200"/>
<circle cx="1447" cy="880" r="7.500" fill="none" stroke="#fff"/><ellipse cx="1447" cy="880" rx="3.500" ry="7.500" fill="none" stroke="#fff" stroke-width=".8"/><path d="M1440 877.500h14M1440 882.500h14" stroke="#fff" stroke-width=".8"/><circle cx="1452" cy="885" r="3" fill="#06131f" stroke="#fff"/>
<path d="M1464 877h3l4-3v12l-4-3h-3z" fill="none" stroke="#fff"/><path d="M1473 876q3 4 0 8M1476 874q4 6 0 12" fill="none" stroke="#fff"/>
<text x="1491" y="875" font-size="12.500" fill="#fff" textLength="48" lengthAdjust="spacingAndGlyphs">11:36 PM</text>
<text x="1489" y="893" font-size="12.500" fill="#fff" textLength="52" lengthAdjust="spacingAndGlyphs">4/19/2026</text>
<path d="M1559.500 872.500h15v13h-5l-2.500 2.500-2.500-2.500h-5z" fill="none" stroke="#fff" stroke-width="1.100"/>
<rect x="1595" y="860" width="1" height="40" fill="#3a4650"/>
</svg>
</body></html>
